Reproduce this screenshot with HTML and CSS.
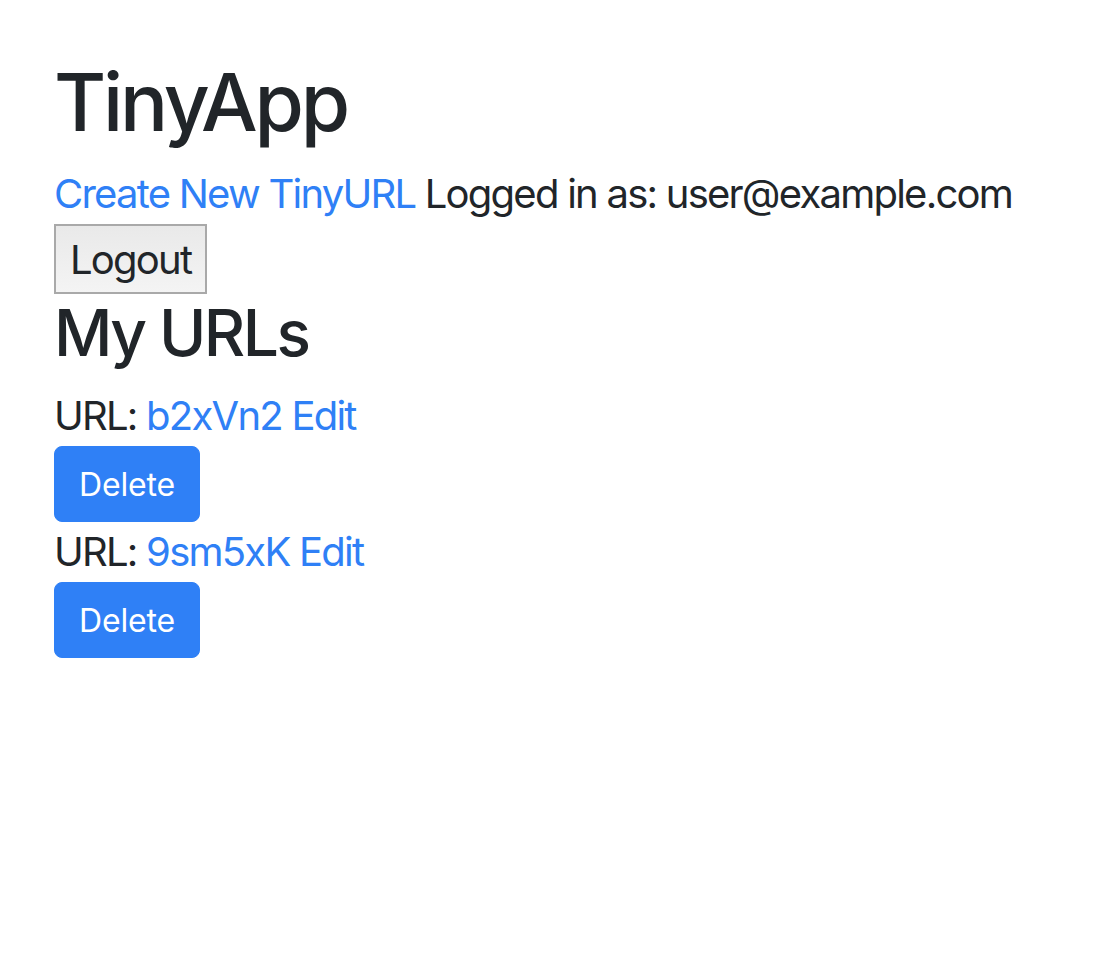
FILE: index.html
```html
<!DOCTYPE html>
<html lang="en">
<head>
<meta charset="utf-8">
<title>TinyApp</title>
<link rel="stylesheet" href="styles.css">
</head>
<body>
<main class="page">
  <h1 class="title">TinyApp</h1>
  <div class="nav-line"><a class="link" href="#">Create New TinyURL</a> Logged in as: user@example.com</div>
  <form class="logout-form"><button type="button" class="logout">Logout</button></form>
  <h2 class="subtitle">My URLs</h2>
  <div class="url-item">
    <div class="url-line">URL: <a class="link" href="#">b2xVn2</a> <a class="link" href="#">Edit</a></div>
    <form class="delete-form"><button type="button" class="btn-delete">Delete</button></form>
  </div>
  <div class="url-item">
    <div class="url-line">URL: <a class="link" href="#">9sm5xK</a> <a class="link" href="#">Edit</a></div>
    <form class="delete-form"><button type="button" class="btn-delete">Delete</button></form>
  </div>
</main>
</body>
</html>
```
FILE: styles.css
```css
html, body {
  margin: 0;
  padding: 0;
  background: #ffffff;
}
body {
  font-family: Inter, "Noto Sans", "Liberation Sans", sans-serif;
  color: #212529;
}
.page {
  padding: 54px 54px 0 54px;
}
.title {
  margin: 0 0 14px 0;
  font-size: 80px;
  line-height: 96px;
  font-weight: 500;
  letter-spacing: -0.04em;
}
.nav-line, .url-line {
  font-size: 40px;
  line-height: 60px;
  letter-spacing: -0.044em;
  white-space: nowrap;
}
.link {
  color: #2f80f6;
  text-decoration: none;
}
.logout-form, .delete-form {
  margin: 0;
}
.logout {
  display: block;
  height: 70px;
  padding: 0 14px;
  font-family: inherit;
  font-size: 40px;
  letter-spacing: -0.044em;
  color: #212529;
  border: 2px solid #a9a9a9;
  border-radius: 0;
  background: linear-gradient(#e9e9e9, #f4f4f4);
}
.subtitle {
  margin: 0 0 15px 0;
  font-size: 64px;
  line-height: 77px;
  font-weight: 500;
  letter-spacing: -0.04em;
}
.btn-delete {
  display: block;
  height: 76px;
  padding: 0 24px;
  font-family: inherit;
  font-size: 32px;
  letter-spacing: -0.005em;
  color: #ffffff;
  background: #2f80f6;
  border: 1px solid #2f80f6;
  border-radius: 8px;
}
```
